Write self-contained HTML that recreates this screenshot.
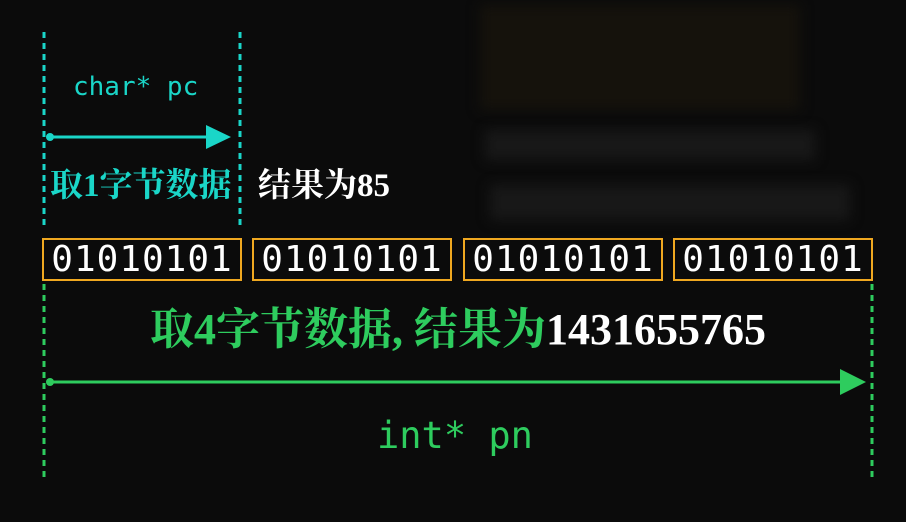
<!DOCTYPE html>
<html><head><meta charset="utf-8"><style>
body{margin:0;width:906px;height:522px;background:#0b0b0b;overflow:hidden;position:relative;font-family:"Liberation Sans",sans-serif}
.a{position:absolute;white-space:nowrap}
.box{position:absolute;top:238px;height:39px;width:196px;border:2px solid #f0a820;color:#fff;font-family:"DejaVu Sans Mono","Liberation Mono",monospace;font-size:36px;line-height:39px;text-align:center;letter-spacing:1px}
.cj{font-family:"Liberation Serif","Noto Serif CJK SC",serif;font-weight:bold}
.blur{position:absolute;background:#1c1c1c;filter:blur(6px)}
</style></head><body>
<div class="blur" style="left:480px;top:5px;width:320px;height:105px;background:#15120c"></div>
<div class="blur" style="left:485px;top:130px;width:330px;height:30px;background:#181818"></div>
<div class="blur" style="left:490px;top:185px;width:360px;height:35px;background:#181818"></div>
<svg class="a" style="left:0;top:0" width="906" height="522">
<g stroke-dasharray="6,5" stroke-width="3">
<line x1="44" y1="32" x2="44" y2="230" stroke="#1ad6c8"/>
<line x1="240" y1="32" x2="240" y2="230" stroke="#1ad6c8"/>
<line x1="44" y1="284" x2="44" y2="482" stroke="#2ecc5e"/>
<line x1="872" y1="284" x2="872" y2="482" stroke="#2ecc5e"/>
</g>
<line x1="50" y1="137" x2="212" y2="137" stroke="#1ad6c8" stroke-width="3"/>
<circle cx="50" cy="137" r="4" fill="#1ad6c8"/>
<polygon points="206,125 231,137 206,149" fill="#1ad6c8"/>
<line x1="50" y1="382" x2="845" y2="382" stroke="#2ecc5e" stroke-width="3"/>
<circle cx="50" cy="382" r="4" fill="#2ecc5e"/>
<polygon points="840,369 866,382 840,395" fill="#2ecc5e"/>
</svg>
<div class="a" style="left:73px;top:72px;color:#1ad6c8;font-family:'DejaVu Sans Mono',monospace;font-size:26px">char* pc</div>
<div class="a cj" style="left:50px;top:166px;color:#1ad6c8;font-size:33px;line-height:40px">取1字节数据</div>
<div class="a cj" style="left:258px;top:166px;color:#fff;font-size:33px;line-height:40px">结果为85</div>
<div class="box" style="left:42px">01010101</div>
<div class="box" style="left:252px">01010101</div>
<div class="box" style="left:463px">01010101</div>
<div class="box" style="left:673px">01010101</div>
<div class="a cj" style="left:0;width:916px;text-align:center;top:304px;color:#2ecc5e;font-size:44px;line-height:52px">取4字节数据, 结果为<span style="color:#fff">1431655765</span></div>
<div class="a" style="left:377px;top:414px;color:#2ecc5e;font-family:'DejaVu Sans Mono',monospace;font-size:37px">int* pn</div>
</body></html>
